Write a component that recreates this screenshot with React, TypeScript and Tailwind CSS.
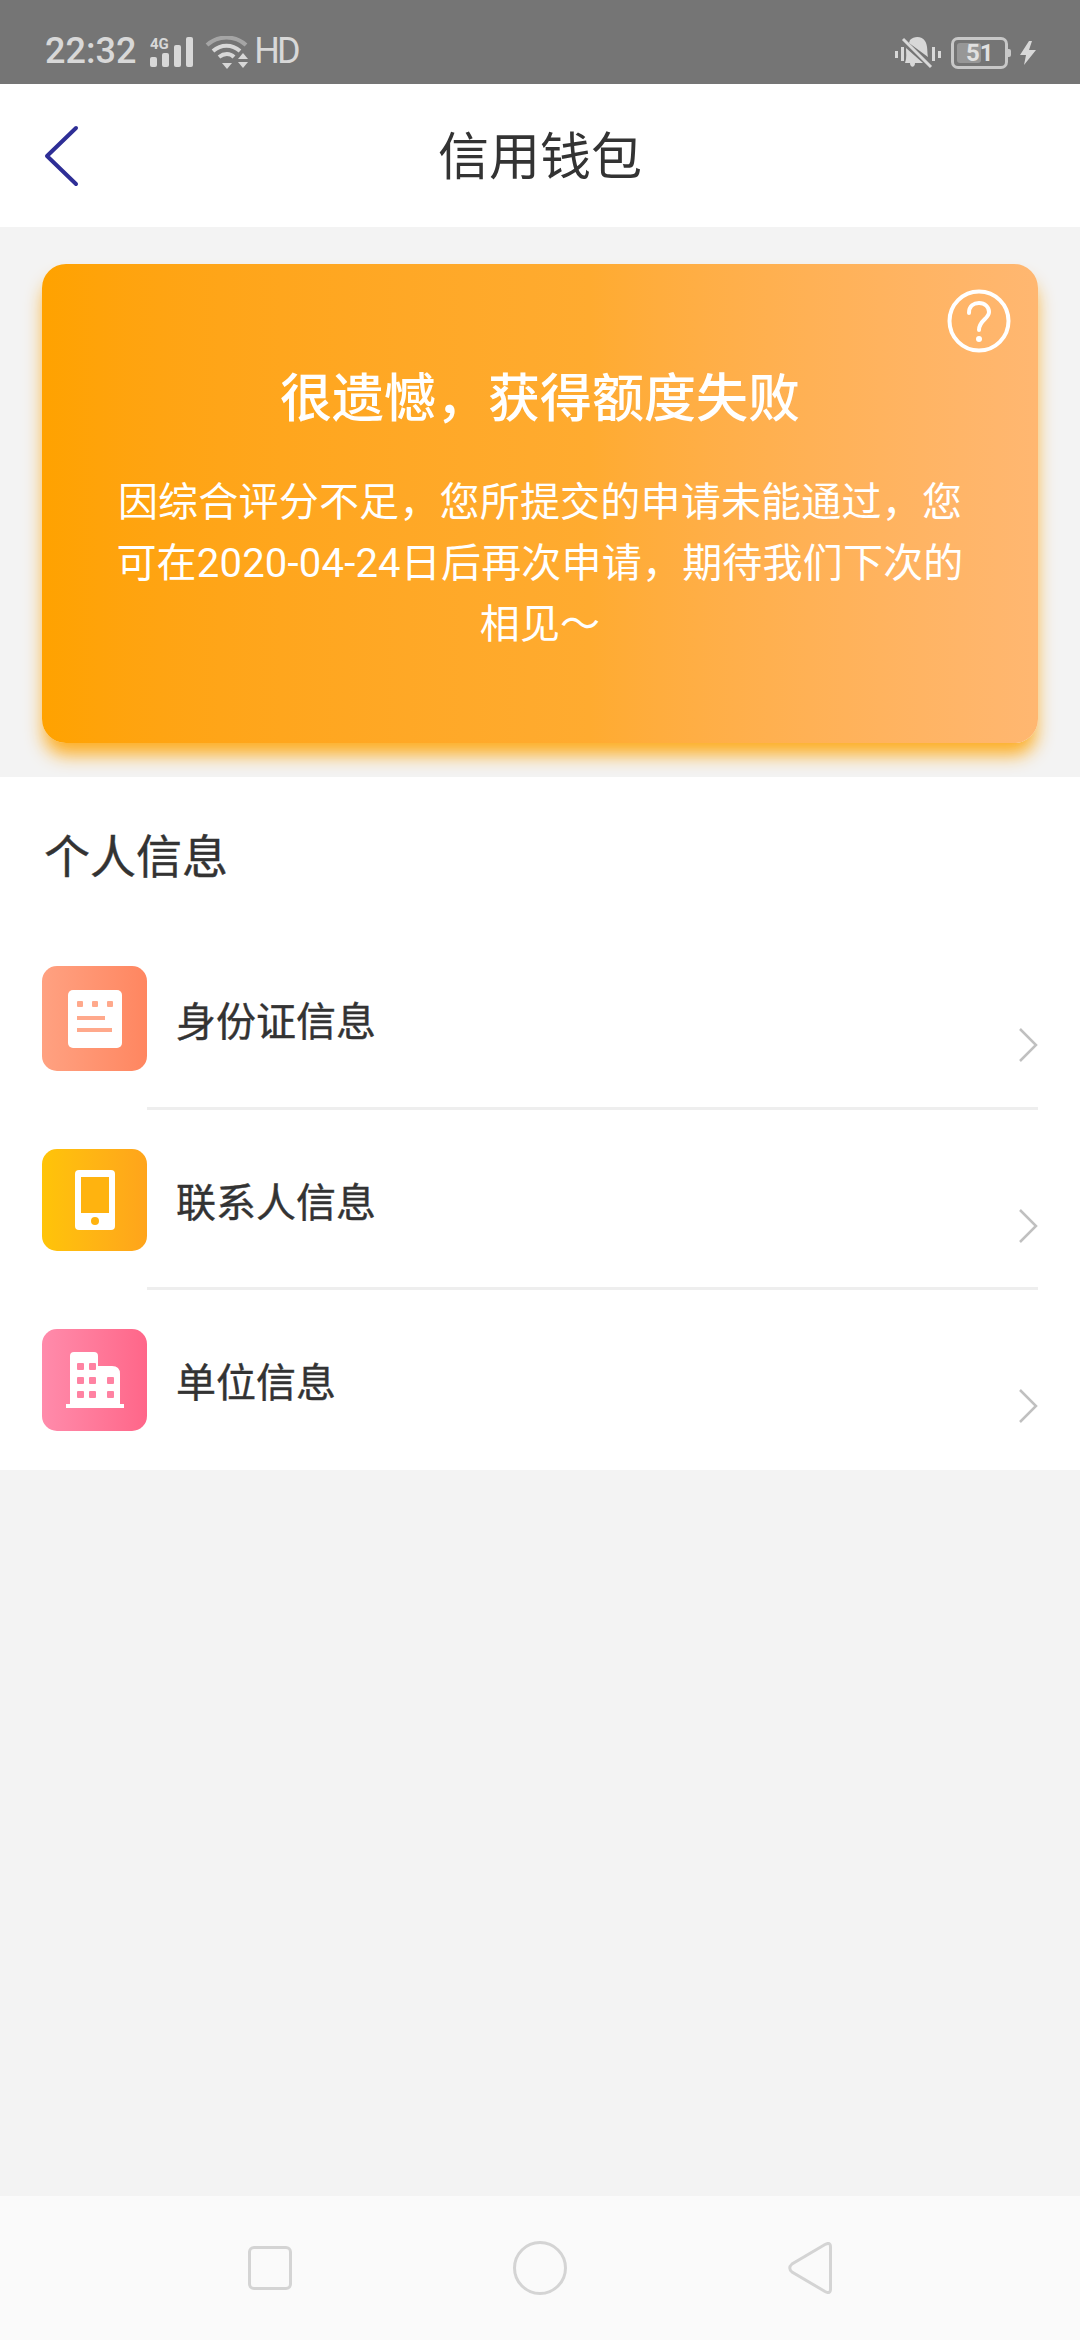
import React from "react";

const font = { fontFamily: '"Roboto", "Noto Sans CJK SC", sans-serif' };

function SignalIcon() {
    return (
        <svg width="44" height="32" viewBox="0 0 44 32" className="block">
            <text x="0" y="13" fontSize="15" fontWeight="700" fill="#d8d8d8" fontFamily="Roboto, sans-serif">4G</text>
            <rect x="0" y="21" width="7" height="10" rx="2" fill="#d8d8d8" />
            <rect x="12" y="17" width="7" height="14" rx="2" fill="#d8d8d8" />
            <rect x="24" y="9" width="7" height="22" rx="2" fill="#d8d8d8" />
            <rect x="36" y="1" width="7" height="30" rx="2" fill="#d8d8d8" />
        </svg>
    );
}

function WifiIcon() {
    return (
        <svg width="44" height="34" viewBox="0 0 44 34" className="block">
            <path d="M2 9C13 -1 30 -1 41 9" fill="none" stroke="#a5a5a5" strokeWidth="4" />
            <path d="M8 15C16 8 27 8 35 15" fill="none" stroke="#d8d8d8" strokeWidth="4" />
            <path d="M14 21C19 17 25 17 29 21" fill="none" stroke="#d8d8d8" strokeWidth="4" />
            <path d="M17 27H27L22 33Z" fill="#d8d8d8" />
            <path d="M33 23L38 17L43 23Z" fill="#d8d8d8" />
            <path d="M33 26L43 26L38 32Z" fill="#d8d8d8" />
        </svg>
    );
}

function MuteIcon() {
    return (
        <svg width="46" height="34" viewBox="0 0 46 34" className="block">
            <rect x="0" y="15" width="3" height="7" fill="#d8d8d8" />
            <rect x="6" y="11" width="3" height="14" fill="#d8d8d8" />
            <rect x="37" y="11" width="3" height="14" fill="#d8d8d8" />
            <rect x="43" y="15" width="3" height="7" fill="#d8d8d8" />
            <path d="M15 4C19 0 27 0 30 5C33 9 32 17 33 21L14 7Z" fill="#d8d8d8" />
            <path d="M11 12L28 27H20C20 32 15 32 15 27H10C12 22 11 17 11 12Z" fill="#d8d8d8" />
            <path d="M8 3L36 31" stroke="#d8d8d8" strokeWidth="3" />
        </svg>
    );
}

function BatteryIcon() {
    return (
        <div className="flex items-center">
            <div className="w-[57px] h-[32px] rounded-[7px] border-[3px] border-[#c8c8c8] p-[3px] relative">
                <div className="w-[24px] h-full rounded-[3px] bg-[#979797]" />
                <span className="absolute left-[12px] top-[-1px] text-[24px] leading-[28px] font-bold text-[#e0e0e0]">51</span>
            </div>
            <div className="w-[3px] h-[8px] bg-[#c8c8c8] rounded-r-[2px]" />
        </div>
    );
}

function BoltIcon() {
    return (
        <svg width="16" height="24" viewBox="0 0 16 24" className="block">
            <path d="M9 0L0 14H6L4 24L16 9H9L12 0Z" fill="#d8d8d8" />
        </svg>
    );
}

function IdIcon() {
    return (
        <svg width="54" height="58" viewBox="0 0 54 58">
            <rect x="0" y="0" width="54" height="58" rx="5" fill="#fff" />
            <rect x="9" y="11" width="6" height="6" rx="1" fill="#ffa98c" />
            <rect x="24" y="11" width="6" height="6" rx="1" fill="#ffa98c" />
            <rect x="39" y="11" width="6" height="6" rx="1" fill="#ffa98c" />
            <rect x="9" y="26" width="28" height="4" fill="#ffa98c" />
            <rect x="9" y="38" width="35" height="4" fill="#ffa98c" />
        </svg>
    );
}

function PhoneIcon() {
    return (
        <svg width="40" height="60" viewBox="0 0 40 60">
            <rect x="0" y="0" width="40" height="60" rx="4" fill="#fff" />
            <rect x="6" y="7" width="28" height="36" fill="#ffb30f" />
            <circle cx="20" cy="51" r="4" fill="#ffb30f" />
        </svg>
    );
}

function BuildingIcon() {
    const cells = [
        [11, 11], [23, 11], [11, 25], [23, 25], [41, 25], [11, 39], [23, 39], [41, 39],
    ];
    return (
        <svg width="58" height="56" viewBox="0 0 58 56">
            <path d="M4 4Q4 0 8 0H28Q32 0 32 4V14H46Q54 14 54 22V52H58V56H0V52H4Z" fill="#fff" />
            {cells.map(([x, y]) => (
                <rect key={`${x}-${y}`} x={x} y={y} width="7" height="7" rx="1" fill="#ff82a2" />
            ))}
        </svg>
    );
}

function Chevron() {
    return (
        <svg width="20" height="36" viewBox="0 0 20 36" className="block">
            <path d="M2 2L18 18L2 34" fill="none" stroke="#c0c0c0" strokeWidth="2.5" />
        </svg>
    );
}

function InfoRow({ icon, iconClass, label, heightClass, chevronClass, paddingClass }: {
    icon: React.ReactNode;
    iconClass: string;
    label: string;
    heightClass: string;
    chevronClass: string;
    paddingClass: string;
}) {
    return (
        <div className={`flex items-center px-[42px] ${paddingClass}`}>
            <div className={`w-[105px] ${heightClass} rounded-[15px] flex items-center justify-center ${iconClass}`}>
                {icon}
            </div>
            <span className="ml-[29px] pt-[8px] flex-1 text-[40px] leading-[56px] [-webkit-text-stroke:0.4px_#333333] text-[#333333]">{label}</span>
            <div className={chevronClass}>
                <Chevron />
            </div>
        </div>
    );
}

export default function App() {
    return (
        <div className="flex flex-col w-[1080px] h-[2340px] bg-[#f3f3f3] overflow-hidden" style={font}>
            <div className="h-[84px] bg-[#757575] flex items-end pb-[13px] pl-[45px] pr-[44px]">
                <span className="text-[36px] leading-[40px] font-medium text-[#d8d8d8]">22:32</span>
                <div className="ml-[14px] mb-[3px]"><SignalIcon /></div>
                <div className="ml-[11px] mb-[1px]"><WifiIcon /></div>
                <span className="ml-[5px] text-[36px] leading-[40px] tracking-[-3px] text-[#d8d8d8]">HD</span>
                <div className="flex-1" />
                <div className="mb-[1px]"><MuteIcon /></div>
                <div className="ml-[10px] mb-[2px]"><BatteryIcon /></div>
                <div className="ml-[9px] mb-[6px]"><BoltIcon /></div>
            </div>

            <div className="h-[143px] bg-white flex items-center justify-center relative">
                <svg width="36" height="62" viewBox="0 0 36 62" className="absolute left-[43px] top-[41px]">
                    <path d="M33 3L4 31L33 59" fill="none" stroke="#2e2e96" strokeWidth="4" strokeLinecap="round" strokeLinejoin="round" />
                </svg>
                <span className="pt-[5px] text-[51px] leading-[70px] text-[#333333]">信用钱包</span>
            </div>

            <div className="h-[550px] px-[42px] pt-[37px]">
                <div className="h-[479px] rounded-[24px] bg-gradient-to-r from-[#ffa200] via-[#ffab30] via-55% to-[#ffb771] shadow-[0_14px_18px_-2px_rgba(255,162,0,0.85)] relative px-[70px] pt-[100px] text-center text-white">
                    <svg width="64" height="64" viewBox="0 0 64 64" className="absolute right-[27px] top-[25px]">
                        <circle cx="32" cy="32" r="29.5" fill="none" stroke="#fff" strokeWidth="4" />
                        <path d="M22 24C22 17 27 14 32 14C38 14 42 18 42 23C42 30 32 31 32 41" fill="none" stroke="#fff" strokeWidth="4" strokeLinecap="round" />
                        <circle cx="32" cy="50" r="3" fill="#fff" />
                    </svg>
                    <div className="text-[52px] leading-[72px] font-medium">很遗憾，获得额度失败</div>
                    <p className="mt-[36px] text-[40px] leading-[61px] tracking-[0.2px]">
                        因综合评分不足，您所提交的申请未能通过，您可在2020-04-24日后再次申请，期待我们下次的相见～
                    </p>
                </div>
            </div>

            <div className="bg-white relative pt-[49px]">
                <div className="px-[44px] text-[46px] leading-[62px] [-webkit-text-stroke:0.4px_#333333] text-[#333333]">个人信息</div>
                <InfoRow
                    icon={<IdIcon />}
                    iconClass="bg-gradient-to-r from-[#ffa181] to-[#ff8660]"
                    label="身份证信息"
                    heightClass="h-[105px]"
                    chevronClass="mt-[52px]"
                    paddingClass="mt-[78px] pb-[36px]"
                />
                <div className="ml-[147px] mr-[42px] h-[3px] bg-[#eeeeee]" />
                <InfoRow
                    icon={<PhoneIcon />}
                    iconClass="bg-gradient-to-r from-[#ffc408] to-[#ffa41b]"
                    label="联系人信息"
                    heightClass="h-[102px]"
                    chevronClass="mt-[52px]"
                    paddingClass="pt-[39px] pb-[36px]"
                />
                <div className="ml-[147px] mr-[42px] h-[3px] bg-[#eeeeee]" />
                <InfoRow
                    icon={<BuildingIcon />}
                    iconClass="bg-gradient-to-r from-[#ff8bab] to-[#ff6689]"
                    label="单位信息"
                    heightClass="h-[102px]"
                    chevronClass="mt-[52px]"
                    paddingClass="pt-[39px] pb-[39px]"
                />
            </div>

            <div className="flex-1" />

            <div className="h-[144px] bg-[#fafafa] flex items-center pl-[248px]">
                <div className="w-[44px] h-[44px] rounded-[6px] border-[3px] border-[#d4d4d4]" />
                <div className="ml-[221px] w-[54px] h-[54px] rounded-full border-[3px] border-[#d4d4d4]" />
                <svg width="44" height="52" viewBox="0 0 44 52" className="ml-[221px]">
                    <path d="M37 2.5Q42.5 -0.5 42.5 5V47Q42.5 52.5 37 49.5L4 30Q-0.5 26 4 22Z" fill="none" stroke="#d4d4d4" strokeWidth="3" />
                </svg>
            </div>
        </div>
    );
}
